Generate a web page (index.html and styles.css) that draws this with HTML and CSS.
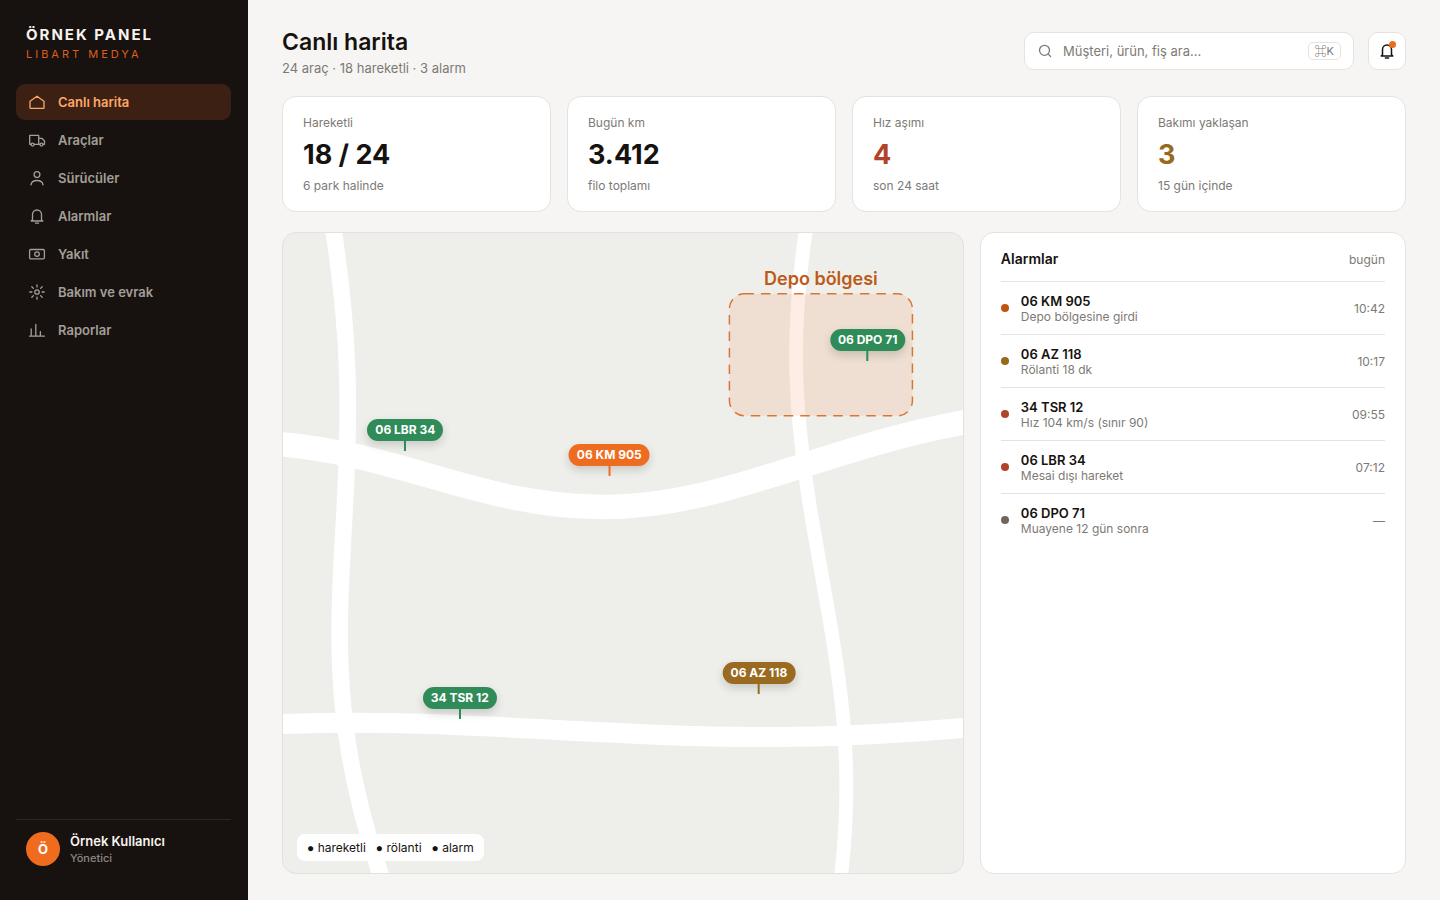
FILE: index.html
```html
<!DOCTYPE html>
<html lang="tr">
<head>
<meta charset="utf-8">
<title>Canlı harita</title>
<meta name="viewport" content="width=device-width, initial-scale=1">
<link rel="stylesheet" href="styles.css">
</head>
<body>
<div class="app">
  <aside class="sidebar">
    <div class="brand">
      <div class="brand-name">ÖRNEK PANEL</div>
      <div class="brand-sub">LIBART MEDYA</div>
    </div>
    <nav class="nav">
      <a class="nav-item active" href="#"><svg class="icon" viewBox="0 0 18 18"><path d="M2 8.300 9 3.200l7 5.100v6.400c0 .4-.2.600-.6.600H2.600c-.4 0-.6-.2-.6-.6z"/></svg>Canlı harita</a>
      <a class="nav-item" href="#"><svg class="icon" viewBox="0 0 18 18"><path d="M3 13.300H1.700V4.300h9v9H6.300M10.700 7.300h3.100l2.700 2.700v3.300h-1.200M10.700 13.300h1"/><circle cx="4.600" cy="13.600" r="1.500"/><circle cx="13.500" cy="13.600" r="1.500"/></svg>Araçlar</a>
      <a class="nav-item" href="#"><svg class="icon" viewBox="0 0 18 18"><circle cx="9" cy="5.600" r="2.900"/><path d="M3 15.800c.4-2.800 2.600-4.300 6-4.300s5.600 1.500 6 4.300"/></svg>Sürücüler</a>
      <a class="nav-item" href="#"><svg class="icon" viewBox="0 0 18 18"><path d="M4.500 12.800V7.500a4.500 4.500 0 0 1 9 0v5.300l1.300 1.200H3.200zM7.400 16.100h3.200"/></svg>Alarmlar</a>
      <a class="nav-item" href="#"><svg class="icon" viewBox="0 0 18 18"><rect x="1.600" y="4.500" width="14.800" height="9.300" rx="1.200"/><circle cx="9" cy="9.100" r="2.300"/></svg>Yakıt</a>
      <a class="nav-item" href="#"><svg class="icon" viewBox="0 0 18 18"><circle cx="9" cy="9" r="2.200"/><path d="M9 1.800v2.100M9 14.100v2.100M1.800 9h2.100M14.100 9h2.100M3.800 3.800l1.600 1.600M12.600 12.600l1.600 1.600M14.200 3.800l-1.600 1.600M5.400 12.600l-1.600 1.600"/></svg>Bakım ve evrak</a>
      <a class="nav-item" href="#"><svg class="icon" viewBox="0 0 18 18"><path d="M1.600 15.200h14.800M3.200 15V8M7.800 15V3.300M12.400 15v-4.300"/></svg>Raporlar</a>
    </nav>
    <div class="user">
      <div class="avatar">Ö</div>
      <div>
        <div class="user-name">Örnek Kullanıcı</div>
        <div class="user-role">Yönetici</div>
      </div>
    </div>
  </aside>

  <main class="main">
    <header class="topbar">
      <div class="heading">
        <h1 class="title">Canlı harita</h1>
        <p class="subtitle">24 araç · 18 hareketli · 3 alarm</p>
      </div>
      <label class="search">
        <svg class="search-icon" viewBox="0 0 16 16"><circle cx="7.500" cy="7.300" r="5"/><path d="m11.200 11 2.500 2.600"/></svg>
        <input class="search-input" type="text" placeholder="Müşteri, ürün, fiş ara..." aria-label="Ara">
        <kbd class="kbd"><span class="cmd">⌘</span>K</kbd>
      </label>
      <button class="bell" type="button" aria-label="Bildirimler">
        <svg class="bell-icon" viewBox="0 0 18 18"><path d="M4.500 12.800V7.500a4.500 4.500 0 0 1 9 0v5.300l1.300 1.200H3.200zM7.400 16.100h3.200"/></svg>
        <span class="bell-dot"></span>
      </button>
    </header>

    <section class="stats">
      <article class="card stat"><div class="label">Hareketli</div><div class="value">18 / 24</div><div class="label">6 park halinde</div></article>
      <article class="card stat"><div class="label">Bugün km</div><div class="value">3.412</div><div class="label">filo toplamı</div></article>
      <article class="card stat"><div class="label">Hız aşımı</div><div class="value red">4</div><div class="label">son 24 saat</div></article>
      <article class="card stat"><div class="label">Bakımı yaklaşan</div><div class="value amber">3</div><div class="label">15 gün içinde</div></article>
    </section>

    <section class="content">
      <div class="map">
        <svg class="map-canvas" viewBox="0 0 680 640" preserveAspectRatio="xMidYMid slice">
          <g class="roads">
            <path stroke-width="24.500" d="M-5 211.200 0 211.500C120 222 200 274 320 274S540 215 680 189.500l5-1"/>
            <path stroke-width="20" d="M-5 491.200 0 491C180 485 300 504 490 504 560 504 620 500 680 495l5-.5"/>
            <path stroke-width="16.600" d="M50-5 51 0C66 100 68 170 61 290 54 410 50 500 97 640l2 5"/>
            <path stroke-width="13.800" d="M523.500-5 522.500 0C508 100 509 180 535 320 556 440 572 520 558.500 640l-1 5"/>
          </g>
          <rect class="zone" x="446.500" y="60.800" width="183" height="122" rx="15"/>
          <text class="zone-label" x="538" y="52">Depo bölgesi</text>
        </svg>
        <div class="pin green" style="left:18%;top:34%"><span class="plate">06 LBR 34</span></div>
        <div class="pin orange" style="left:48%;top:38%"><span class="plate">06 KM 905</span></div>
        <div class="pin green" style="left:86%;top:20%"><span class="plate">06 DPO 71</span></div>
        <div class="pin green" style="left:26%;top:76%"><span class="plate">34 TSR 12</span></div>
        <div class="pin brown" style="left:70%;top:72%"><span class="plate">06 AZ 118</span></div>
        <div class="legend"><span><i class="bullet">●</i> hareketli</span><span><i class="bullet">●</i> rölanti</span><span><i class="bullet">●</i> alarm</span></div>
      </div>

      <div class="card alarms">
        <div class="alarms-head"><h2 class="alarms-title">Alarmlar</h2><span class="label">bugün</span></div>
        <ul class="alarm-list">
          <li class="alarm"><i class="dot dot-orange"></i><div class="alarm-text"><b class="alarm-plate">06 KM 905</b><span class="alarm-note">Depo bölgesine girdi</span></div><time class="label time">10:42</time></li>
          <li class="alarm"><i class="dot dot-amber"></i><div class="alarm-text"><b class="alarm-plate">06 AZ 118</b><span class="alarm-note">Rölanti 18 dk</span></div><time class="label time">10:17</time></li>
          <li class="alarm"><i class="dot dot-red"></i><div class="alarm-text"><b class="alarm-plate">34 TSR 12</b><span class="alarm-note">Hız 104 km/s (sınır 90)</span></div><time class="label time">09:55</time></li>
          <li class="alarm"><i class="dot dot-red"></i><div class="alarm-text"><b class="alarm-plate">06 LBR 34</b><span class="alarm-note">Mesai dışı hareket</span></div><time class="label time">07:12</time></li>
          <li class="alarm"><i class="dot dot-gray"></i><div class="alarm-text"><b class="alarm-plate">06 DPO 71</b><span class="alarm-note">Muayene 12 gün sonra</span></div><span class="label time">—</span></li>
        </ul>
      </div>
    </section>
  </main>
</div>
</body>
</html>
```

FILE: styles.css
```css
* { box-sizing: border-box; }
body {
  margin: 0;
  font-family: Inter, "Liberation Sans", sans-serif;
  font-size: 14px;
  color: #16120f;
  background: #f6f5f3;
}
h1, h2, p, ul { margin: 0; padding: 0; }
.app { display: grid; grid-template-columns: 248px 1fr; min-height: 100vh; }

/* Sidebar */
.sidebar {
  display: flex;
  flex-direction: column;
  padding: 26px 17px 22px 16px;
  background: #17120f;
}
.brand { padding: 0 10px 22px; }
.brand-name { font-size: 15px; line-height: 18px; font-weight: 700; letter-spacing: 2px; color: #f7f3ee; }
.brand-sub { margin-top: 2px; font-size: 11px; line-height: 16px; letter-spacing: 3px; color: #dc5f1b; }
.nav { display: flex; flex-direction: column; gap: 2px; }
.nav-item {
  display: flex;
  align-items: center;
  gap: 12px;
  height: 36px;
  padding: 0 12px;
  border-radius: 9px;
  font-size: 13px;
  font-weight: 600;
  color: #a39e98;
  text-decoration: none;
}
.nav-item.active { background: #3b2013; color: #ffa766; }
.icon, .search-icon, .bell-icon {
  flex: none;
  fill: none;
  stroke: currentColor;
  stroke-width: 1.3;
  stroke-linecap: round;
  stroke-linejoin: round;
}
.icon { width: 18px; height: 18px; }
.user {
  display: flex;
  align-items: center;
  gap: 10px;
  margin-top: auto;
  padding: 12px 10px;
  border-top: 1px solid #2d2825;
}
.avatar {
  display: grid;
  place-items: center;
  width: 34px;
  height: 34px;
  border-radius: 50%;
  background: #ef6c1f;
  color: #fff;
  font-size: 13px;
  font-weight: 700;
}
.user-name { font-size: 13px; line-height: 18px; font-weight: 600; color: #f7f3ee; }
.user-role { font-size: 11px; line-height: 16px; font-weight: 500; color: #8b8681; }

/* Main column */
.main { display: flex; flex-direction: column; gap: 20px; padding: 26px 34px; min-width: 0; }
.topbar { display: flex; align-items: center; gap: 14px; }
.heading { flex: 1; }
.title { font-size: 23px; line-height: 32px; font-weight: 600; }
.subtitle { padding-top: 2px; font-size: 13px; line-height: 16px; color: #7d7a75; }
.search {
  display: flex;
  align-items: center;
  gap: 10px;
  width: 330px;
  height: 38px;
  padding: 0 12px;
  border: 1px solid #e5e3df;
  border-radius: 10px;
  background: #fff;
  color: #7d7a75;
}
.search-icon { width: 16px; height: 16px; }
.search-input {
  flex: 1;
  min-width: 0;
  padding: 0;
  border: 0;
  outline: 0;
  background: none;
  font: 13px/18px Inter, sans-serif;
  color: #16120f;
}
.search-input::placeholder { color: #7d7a75; opacity: 1; }
.kbd {
  display: flex;
  align-items: center;
  padding: 0 6px;
  border: 1px solid #e5e3df;
  border-radius: 5px;
  font: 11px/16px Inter, sans-serif;
}
.cmd { font: 12px/16px "Noto Sans CJK JP", sans-serif; }
.bell {
  position: relative;
  display: grid;
  place-items: center;
  width: 38px;
  height: 38px;
  padding: 0;
  border: 1px solid #e5e3df;
  border-radius: 10px;
  background: #fff;
  color: #16120f;
}
.bell-icon { width: 18px; height: 18px; stroke-width: 1.5; }
.bell-dot {
  position: absolute;
  top: 8px;
  right: 9px;
  width: 7px;
  height: 7px;
  border-radius: 50%;
  background: #ef6c1f;
}

.card { border: 1px solid #e5e3df; border-radius: 14px; background: #fff; }
.label { font-size: 12px; line-height: 16px; color: #7d7a75; }
.stats { display: grid; grid-template-columns: repeat(4, 1fr); gap: 16px; }
.stat { padding: 18px 20px 17px; }
.value { margin: 6px 0 5px; font-size: 27px; line-height: 36px; font-weight: 700; }
.red { color: #b0442b; }
.amber { color: #97691f; }

/* Map */
.content { flex: 1; display: grid; grid-template-columns: 1.6fr 1fr; gap: 16px; }
.map {
  position: relative;
  overflow: hidden;
  border: 1px solid #e2e1dc;
  border-radius: 14px;
  background: #eeefeb;
}
.map-canvas { position: absolute; inset: 0; width: 100%; height: 100%; }
.roads { fill: none; stroke: #fff; }
.zone { fill: #ef6c1f; fill-opacity: .12; stroke: #dc7434; stroke-width: 1.5; stroke-dasharray: 9.5 7; }
.zone-label { font-size: 18px; font-weight: 600; fill: #bd5a1a; text-anchor: middle; }
.pin {
  position: absolute;
  display: flex;
  flex-direction: column;
  align-items: center;
  transform: translate(-50%, -100%);
}
.pin::after { content: ""; width: 2px; height: 10px; background: currentColor; }
.plate {
  padding: 0 8px;
  border-radius: 11px;
  font-size: 12px;
  line-height: 22px;
  font-weight: 700;
  white-space: nowrap;
  box-shadow: 0 4px 10px rgba(0, 0, 0, .16);
  background: currentColor;
  -webkit-text-fill-color: #fff;
}
.green { color: #2f8b58; }
.orange { color: #ee6c1f; }
.brown { color: #996a1f; }
.legend {
  position: absolute;
  left: 14px;
  bottom: 12px;
  display: flex;
  gap: 10px;
  padding: 5px 10px;
  border-radius: 8px;
  background: #fff;
  font-size: 12px;
  line-height: 17px;
}
.bullet { font-family: "Liberation Sans", sans-serif; font-style: normal; line-height: 1; }

/* Alarm list */
.alarms { padding: 16px 20px; }
.alarms-head { display: flex; align-items: baseline; justify-content: space-between; padding-bottom: 12px; }
.alarms-title { font-size: 14px; line-height: 20px; font-weight: 600; }
.alarm-list { list-style: none; }
.alarm {
  display: flex;
  align-items: center;
  gap: 12px;
  height: 53px;
  border-top: 1px solid #e5e3df;
}
.dot { width: 8px; height: 8px; border-radius: 50%; }
.dot-orange { background: #bf5412; }
.dot-amber { background: #97691f; }
.dot-red { background: #b0442b; }
.dot-gray { background: #706660; }
.alarm-text { flex: 1; display: flex; flex-direction: column; }
.alarm-plate { font-size: 13px; line-height: 16px; font-weight: 600; }
.alarm-note { font-size: 12px; line-height: 15px; color: #7d7a75; }
.time { padding-top: 2px; }
```
